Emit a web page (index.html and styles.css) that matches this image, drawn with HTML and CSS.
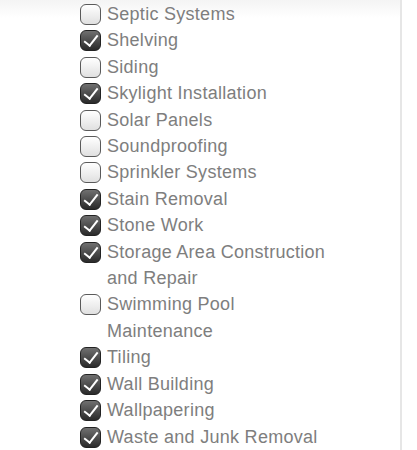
FILE: index.html
```html
<!DOCTYPE html>
<html lang="en">
<head>
  <meta charset="UTF-8" />
  <meta name="viewport" content="width=device-width, initial-scale=1.0" />
  <title>Services</title>
  <link rel="stylesheet" href="styles.css">
</head>
<body>
  <div class="page">
    <ul class="lista">
      <li class="item"><span class="box"></span><span class="nome">Septic Systems</span></li>
      <li class="item"><span class="box on"></span><span class="nome">Shelving</span></li>
      <li class="item"><span class="box"></span><span class="nome">Siding</span></li>
      <li class="item"><span class="box on"></span><span class="nome">Skylight Installation</span></li>
      <li class="item"><span class="box"></span><span class="nome">Solar Panels</span></li>
      <li class="item"><span class="box"></span><span class="nome">Soundproofing</span></li>
      <li class="item"><span class="box"></span><span class="nome">Sprinkler Systems</span></li>
      <li class="item"><span class="box on"></span><span class="nome">Stain Removal</span></li>
      <li class="item"><span class="box on"></span><span class="nome">Stone Work</span></li>
      <li class="item"><span class="box on"></span><span class="nome">Storage Area Construction and Repair</span></li>
      <li class="item"><span class="box"></span><span class="nome">Swimming Pool Maintenance</span></li>
      <li class="item"><span class="box on"></span><span class="nome">Tiling</span></li>
      <li class="item"><span class="box on"></span><span class="nome">Wall Building</span></li>
      <li class="item"><span class="box on"></span><span class="nome">Wallpapering</span></li>
      <li class="item"><span class="box on"></span><span class="nome">Waste and Junk Removal</span></li>
    </ul>
  </div>
</body>
</html>
```

FILE: styles.css
```css
* {
  box-sizing: border-box;
  margin: 0;
  padding: 0;
  font-family: "Liberation Sans", Arial, sans-serif;
}

body {
  background: #ffffff;
  width: 417px;
  height: 450px;
  overflow: hidden;
}

.page {
  height: 450px;
  padding: 1px 0 0 80px;
  border-right: 2px solid #e6e6e6;
  width: 402px;
  background: linear-gradient(#f4f4f4, #ffffff 18px);
}

.lista {
  list-style: none;
}

.item {
  display: flex;
  align-items: flex-start;
  gap: 6px;
  font-size: 18px;
  line-height: 26.4px;
  letter-spacing: 0.28px;
  color: #7e7e7e;
}

.nome {
  width: 228px;
}

.box {
  flex: none;
  width: 21px;
  height: 21px;
  margin-top: 3px;
  border: 1.5px solid #5a5a5a;
  border-radius: 6px;
  background: linear-gradient(#ffffff, #e0e0e0);
  position: relative;
}

.box.on {
  border-color: #222222;
  background: linear-gradient(#707070, #2a2a2a);
}

.box.on::after {
  content: "";
  position: absolute;
  left: 6px;
  top: 1px;
  width: 6px;
  height: 12px;
  border: solid #ffffff;
  border-width: 0 2.5px 2.5px 0;
  transform: rotate(38deg);
}
```
